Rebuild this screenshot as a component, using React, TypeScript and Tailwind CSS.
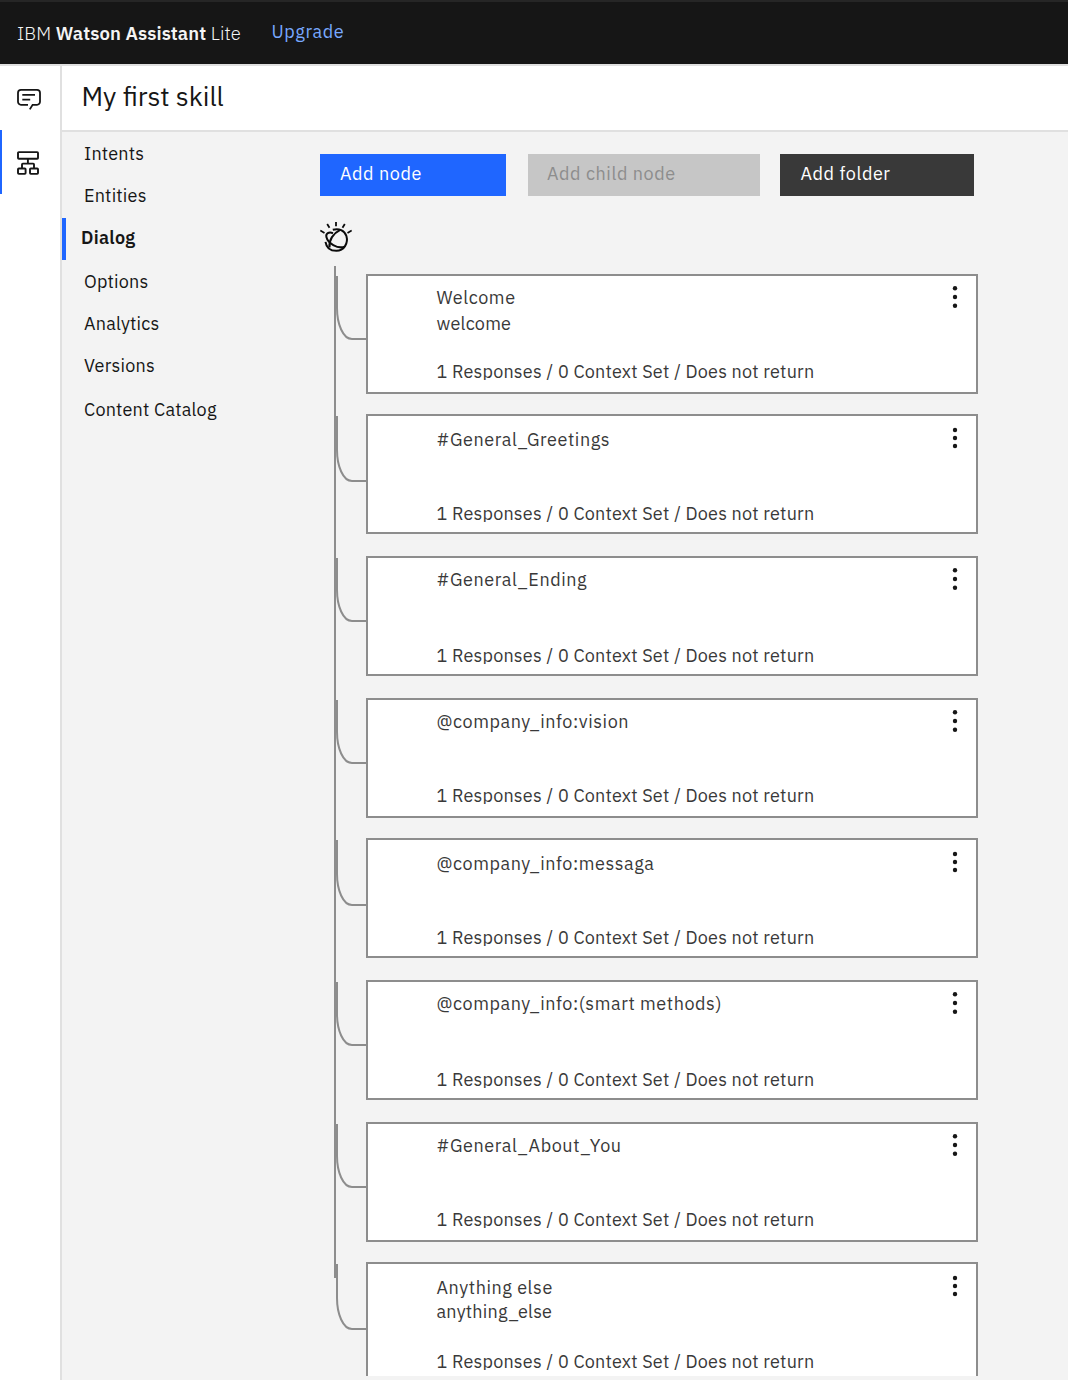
import React from "react";

type NodeItem = {
  title: string;
  condition?: string;
  gap: string;
  low: boolean;
  footer: string;
  last?: boolean;
};

const nodes: NodeItem[] = [
  { title: "Welcome", condition: "welcome", gap: "", low: false, footer: "top-[84px]" },
  { title: "#General_Greetings", gap: "mt-5", low: true, footer: "top-[86px]" },
  { title: "#General_Ending", gap: "mt-[22px]", low: false, footer: "top-[86px]" },
  { title: "@company_info:vision", gap: "mt-[22px]", low: false, footer: "top-[84px]" },
  { title: "@company_info:messaga", gap: "mt-5", low: true, footer: "top-[86px]" },
  { title: "@company_info:(smart methods)", gap: "mt-[22px]", low: false, footer: "top-[86px]" },
  { title: "#General_About_You", gap: "mt-[22px]", low: false, footer: "top-[84px]" },
  { title: "Anything else", condition: "anything_else", gap: "mt-5", low: true, footer: "top-[86px]", last: true },
];

const links = [
  { label: "Intents", cls: "h-[42px]" },
  { label: "Entities", cls: "h-[42px]" },
  { label: "Dialog", cls: "h-[44px]", active: true },
  { label: "Options", cls: "h-[42px]" },
  { label: "Analytics", cls: "h-[42px]" },
  { label: "Versions", cls: "h-[44px]" },
  { label: "Content Catalog", cls: "h-[42px]" },
];

function ChatIcon() {
  return (
    <svg width="24" height="22" viewBox="0 0 24 22" fill="none" stroke="#161616" strokeWidth="1.8">
      <path d="M11 15.8H4A3 3 0 0 1 1 12.8V3.8A3 3 0 0 1 4 .9H20A3 3 0 0 1 23 3.8V12.8A3 3 0 0 1 20 15.8H15.6L12.8 20.4" />
      <path d="M5.3 5.8H18M5.3 10.6H13.2" />
    </svg>
  );
}

function TreeIcon() {
  return (
    <svg width="22" height="24" viewBox="0 0 22 24" fill="none" stroke="#161616" strokeWidth="1.9">
      <rect x="1" y="1.1" width="20" height="6.6" rx=".8" />
      <rect x="1" y="17.5" width="7.6" height="5.4" rx=".8" />
      <rect x="13" y="17.5" width="8" height="5.4" rx=".8" />
      <path d="M10.9 7.7V12.6M5 17.5V13.4Q5 12.6 5.8 12.6H16.2Q17 12.6 17 13.4V17.5" />
    </svg>
  );
}

function WatsonIcon() {
  return (
    <svg width="32" height="30" viewBox="0 0 32 30" fill="none" stroke="#0b0b0b" strokeWidth="2">
      <path d="M16 0V4.3M7.2 2L9.5 5.7M24.8 2L22.5 5.7M.3 8.4L4.5 11M31.7 8.4L27.5 11" strokeWidth="1.8" />
      <path d="M12.8 7.8C19 6 24.4 8.4 26.4 14C28.5 21.2 24 28.8 16.4 28.8C10.4 28.8 6.3 25.4 5.5 19.8" />
      <path d="M13 11.2C8.7 9.6 5.6 11.5 6.4 15C7.8 21 17.2 27.2 24.6 24.8" />
      <path d="M20.2 7.8C13.3 11.2 8.7 18 9.5 25.5" />
    </svg>
  );
}

function DialogNode({ node }: { node: NodeItem }) {
  const last = node.last;
  return (
    <div className={`flex shrink-0 ${last ? "h-[114px]" : "h-[120px]"} ${node.gap}`}>
      <svg className="relative z-10 w-[30px] h-[70px] shrink-0" viewBox="0 0 30 70" fill="none" stroke="#8d8d8d" strokeWidth="2">
        <path d={node.low ? "M1 2V36C1 52 7 67 16 67H30" : "M1 2V34C1 50 7 65 16 65H30"} />
      </svg>
      <article className={`relative w-[612px] border-2 border-[#8d8d8d] bg-white text-[#393939] ${last ? "border-b-0" : ""}`}>
        <h2 className={`absolute left-[68.5px] whitespace-nowrap text-[18px] leading-6 tracking-[0.56px] ${node.low ? "top-[12px]" : "top-[10px]"}`}>{node.title}</h2>
        {node.condition && (
          <p className="absolute left-[68.5px] top-[36px] whitespace-nowrap text-[18px] leading-6 tracking-[0.22px]">{node.condition}</p>
        )}
        <p className={`absolute left-[68.5px] h-[20px] overflow-hidden whitespace-nowrap text-[18px] leading-6 tracking-[0.21px] ${node.footer}`}>
          1 Responses / 0 Context Set / Does not return
        </p>
        <svg className={`absolute left-[584px] ${node.low ? "top-[11px]" : "top-[10px]"}`} width="6" height="23" viewBox="0 0 6 23" fill="#161616">
          <circle cx="3" cy={node.low ? 3 : 2.3} r="2.2" />
          <circle cx="3" cy="11" r="2.2" />
          <circle cx="3" cy={node.low ? 19 : 19.8} r="2.2" />
        </svg>
      </article>
    </div>
  );
}

export default function App() {
  return (
    <div className="flex h-[1380px] w-[1068px] flex-col overflow-hidden bg-[#f3f3f3] font-['IBM_Plex_Sans','Roboto',sans-serif] text-[#161616]">
      <header className="flex h-[66px] shrink-0 border-t-2 border-b-2 border-t-[#262626] border-b-[#e0e0e0] bg-[#161616] pl-[17px] text-[#f4f4f4]">
        <div className="w-[254.5px] whitespace-nowrap pt-[19px] text-[18.5px] leading-6 tracking-[0.09px]">
          <span className="font-light">IBM </span>
          <span className="font-semibold">Watson Assistant</span>
          <span className="font-light"> Lite</span>
        </div>
        <a className="pt-[18px] text-[18px] leading-6 tracking-[0.6px] text-[#78a9ff]">Upgrade</a>
      </header>
      <div className="flex min-h-0 flex-1">
        <aside className="w-[62px] shrink-0 border-r-2 border-[#e0e0e0] bg-white">
          <div className="h-16 pl-[17px] pt-[23px]"><ChatIcon /></div>
          <div className="h-16 border-l-2 border-[#1f66ff] pl-[15px] pt-[21px]"><TreeIcon /></div>
        </aside>
        <section className="flex min-w-0 flex-1 flex-col">
          <div className="h-[66px] shrink-0 border-b-2 border-[#e0e0e0] bg-white pl-[19.5px] pt-[14px]">
            <h1 className="whitespace-nowrap text-[26.6px] leading-8">My first skill</h1>
          </div>
          <div className="flex min-h-0 flex-1">
            <nav className="w-[258px] shrink-0 pt-[2px]">
              {links.map((l) => (
                <div key={l.label} className={l.cls}>
                  <a className={`flex h-[42px] items-center whitespace-nowrap pb-1 text-[18px] ${l.active ? "border-l-4 border-[#1f66ff] pl-[15px] font-semibold tracking-[0.3px]" : "pl-[22px] tracking-[0.2px]"}`}>
                    {l.label}
                  </a>
                </div>
              ))}
            </nav>
            <main className="relative flex flex-col pt-[22px]">
              <div className="flex h-[42px] shrink-0 text-[18px] leading-6 tracking-[0.57px]">
                <button className="w-[186px] bg-[#1f66ff] pb-[3px] pl-5 text-left text-white">Add node</button>
                <button className="ml-[22px] w-[232px] bg-[#c6c6c6] pb-[3px] pl-[19px] text-left text-[#8d8d8d]">Add child node</button>
                <button className="ml-5 w-[194px] bg-[#393939] pb-[3px] pl-[20.5px] text-left text-white">Add folder</button>
              </div>
              <div className="h-[52px] shrink-0 pt-[26px]"><WatsonIcon /></div>
              <div className="absolute left-[14px] top-[134px] h-[1012px] w-[2px] bg-[#8d8d8d]" />
              <div className="ml-4 mt-[26px] flex flex-col">
                {nodes.map((n) => <DialogNode key={n.title} node={n} />)}
              </div>
            </main>
          </div>
        </section>
      </div>
    </div>
  );
}
